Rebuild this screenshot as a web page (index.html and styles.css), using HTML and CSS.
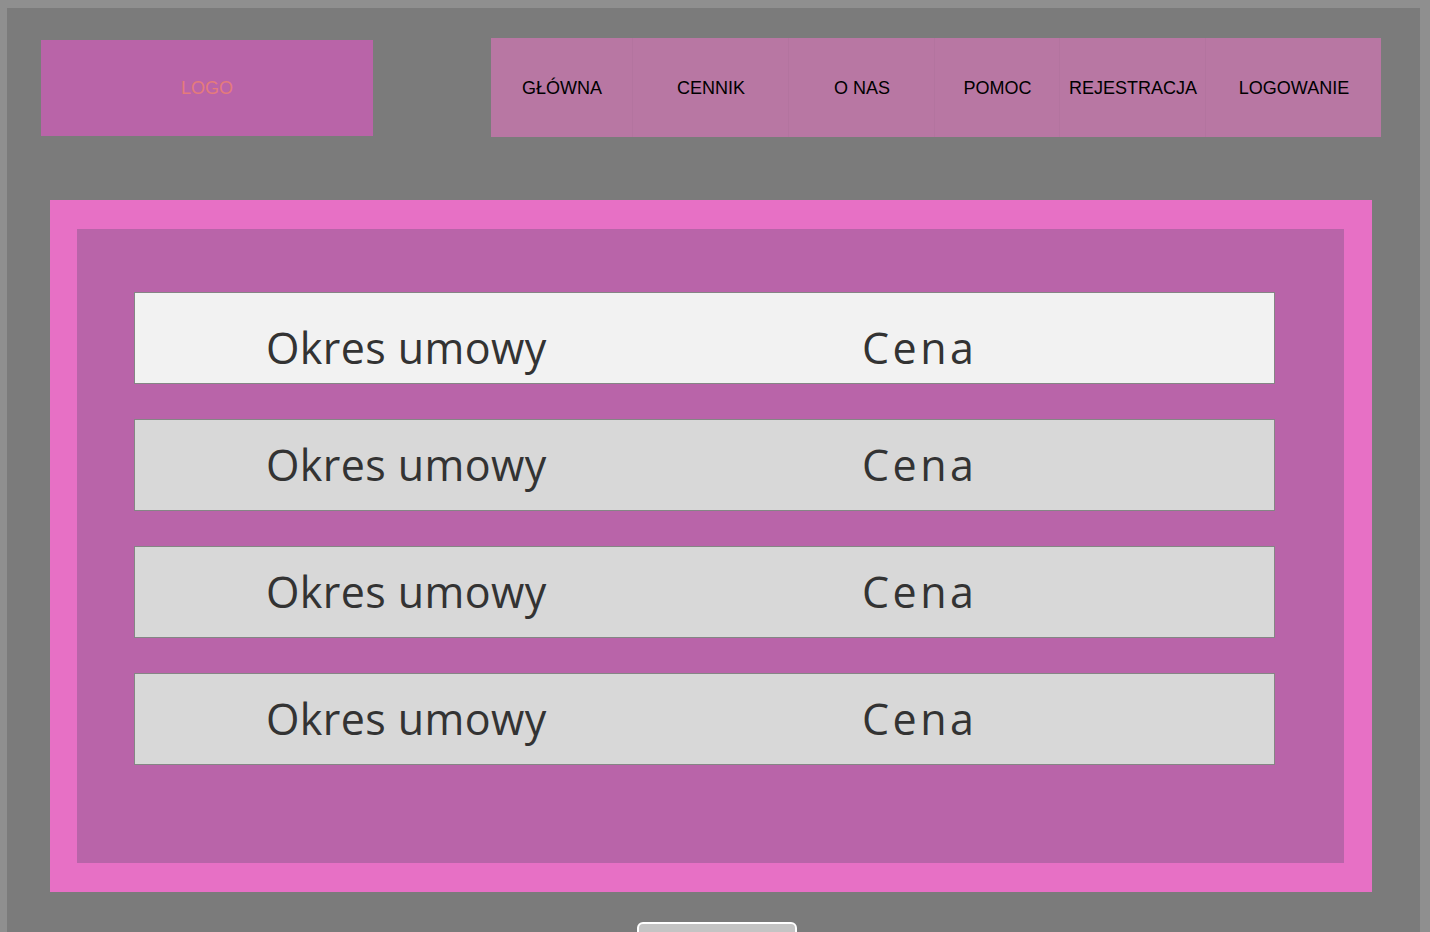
FILE: index.html
```html
<!DOCTYPE html>
<html lang="pl">
<head>
<meta charset="utf-8">
<title>Cennik</title>
<link rel="stylesheet" href="styles.css">
</head>
<body>
<div class="page">
  <header class="header">
    <div class="logo">LOGO</div>
    <nav class="nav">
      <a class="nav-item">GŁÓWNA</a>
      <a class="nav-item">CENNIK</a>
      <a class="nav-item">O NAS</a>
      <a class="nav-item">POMOC</a>
      <a class="nav-item">REJESTRACJA</a>
      <a class="nav-item">LOGOWANIE</a>
    </nav>
  </header>
  <section class="panel">
    <div class="panel-inner">
      <div class="row row-head"><span class="cell">Okres umowy</span><span class="cell cell-price">Cena</span></div>
      <div class="row"><span class="cell">Okres umowy</span><span class="cell cell-price">Cena</span></div>
      <div class="row"><span class="cell">Okres umowy</span><span class="cell cell-price">Cena</span></div>
      <div class="row"><span class="cell">Okres umowy</span><span class="cell cell-price">Cena</span></div>
    </div>
  </section>
  <div class="actions">
    <button class="btn" type="button"></button>
  </div>
</div>
</body>
</html>
```

FILE: styles.css
```css
html, body {
  margin: 0;
  padding: 0;
}
body {
  background: #8f8f8f;
  font-family: "Liberation Sans", Arial, sans-serif;
  height: 932px;
  overflow: hidden;
}
.page {
  margin: 8px 10px 0 7px;
  background: #7b7b7b;
  min-height: 1000px;
}
.header {
  display: flex;
  justify-content: space-between;
  align-items: flex-start;
  padding: 30px 39px 0 34px;
}
.logo {
  margin-top: 2px;
  width: 332px;
  height: 96px;
  background: #b964a8;
  color: #e57b7b;
  font-size: 18px;
  display: flex;
  align-items: center;
  justify-content: center;
}
.nav {
  width: 890px;
  height: 99px;
  background: #b877a3;
  display: grid;
  grid-template-columns: 142px 156px 146px 125px 146px 1fr;
}
.nav-item {
  display: flex;
  align-items: center;
  justify-content: center;
  padding: 2px 0 0 1px;
  color: #000;
  font-size: 18px;
  text-decoration: none;
  border-right: 1px solid rgba(0, 0, 0, 0.025);
}
.nav-item:last-child {
  border-right: none;
}
.panel {
  margin: 63px 48px 0 43px;
  background: #e770c5;
  padding: 29px 28px 29px 27px;
}
.panel-inner {
  background: #b964a9;
  padding: 63px 69px 98px 57px;
  display: flex;
  flex-direction: column;
  gap: 35px;
}
.row {
  height: 92px;
  box-sizing: border-box;
  border: 1px solid #858585;
  background: #d8d8d8;
  display: grid;
  grid-template-columns: 596px 1fr;
  align-items: center;
  padding-left: 131px;
  padding-bottom: 2px;
}
.row-head {
  background: #f2f2f2;
  padding-top: 18px;
  padding-bottom: 0;
}
.cell {
  font-family: "Open Sans", sans-serif;
  font-size: 43px;
  letter-spacing: 0.4px;
  color: #333;
  line-height: 1;
}
.cell-price {
  letter-spacing: 3.5px;
}
.actions {
  padding: 30px 0 0 630px;
}
.btn {
  display: block;
  width: 160px;
  height: 40px;
  background: #c4c4c4;
  border: 2px solid #fff;
  border-radius: 6px;
  padding: 0;
}
```
